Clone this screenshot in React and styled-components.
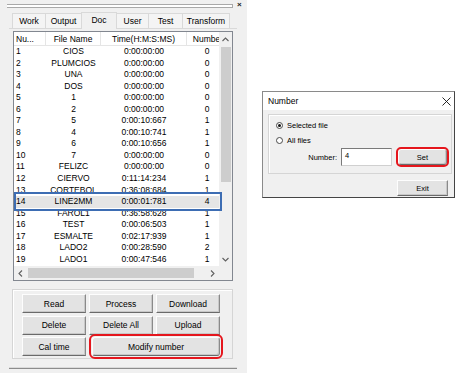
import React from 'react';
import styled, { createGlobalStyle } from 'styled-components';

const ROW_H = 11.55;
const HEAD_H = 14;

const files = [
  [1, 'CIOS', '0:00:00:00', 0],
  [2, 'PLUMCIOS', '0:00:00:00', 0],
  [3, 'UNA', '0:00:00:00', 0],
  [4, 'DOS', '0:00:00:00', 0],
  [5, '1', '0:00:00:00', 0],
  [6, '2', '0:00:00:00', 0],
  [7, '5', '0:00:10:667', 1],
  [8, '4', '0:00:10:741', 1],
  [9, '6', '0:00:10:656', 1],
  [10, '7', '0:00:00:00', 0],
  [11, 'FELIZC', '0:00:00:00', 0],
  [12, 'CIERVO', '0:11:14:234', 1],
  [13, 'CORTEBOL', '0:36:08:684', 1],
  [14, 'LINE2MM', '0:00:01:781', 4],
  [15, 'FAROL1', '0:36:58:628', 1],
  [16, 'TEST', '0:00:06:503', 1],
  [17, 'ESMALTE', '0:02:17:939', 1],
  [18, 'LADO2', '0:00:28:590', 2],
  [19, 'LADO1', '0:00:47:546', 1],
];

const SELECTED = 13;

const tabs = ['Work', 'Output', 'Doc', 'User', 'Test', 'Transform'];
const tabWidths = [34, 37, 36, 33, 35, 48];

const Global = createGlobalStyle`
  html, body {
    margin: 0;
    background: #fff;
    font-family: "Liberation Sans", Arial, sans-serif;
    color: #000;
  }
`;

const Page = styled.div`
  display: flex;
  align-items: flex-start;
  width: 460px;
  height: 373px;
  overflow: hidden;
`;

const LeftPanel = styled.div`
  width: 247px;
  height: 373px;
  background: #f0f0f0;
  display: flex;
  flex-direction: column;
  font-size: 8.5px;
`;

const TopStrip = styled.div`
  height: 12px;
  display: flex;
  align-items: flex-start;
  padding-left: 7px;
`;

const Groove = styled.div`
  width: 225px;
  height: 2px;
  margin-top: 4px;
  background: #fff;
  border-top: 1px solid #a9a9a9;
  border-bottom: 1px solid #a9a9a9;
  border-right: 1px solid #a9a9a9;
`;

const CloseMark = styled.span`
  font-size: 8px;
  font-weight: bold;
  line-height: 8px;
  margin: 1px 0 0 4px;
  color: #222;
`;

const TabRow = styled.div`
  display: flex;
  align-items: flex-end;
  height: 16px;
  margin-left: 12px;
`;

const Tab = styled.div`
  width: ${p => p.$w}px;
  height: ${p => (p.$active ? 17 : 15)}px;
  box-sizing: border-box;
  border: 1px solid #d9d9d9;
  border-bottom: none;
  margin-right: -1px;
  background: ${p => (p.$active ? '#f0f0f0' : '#f4f4f4')};
  display: flex;
  align-items: ${p => (p.$active ? 'flex-start' : 'center')};
  justify-content: center;
  padding-top: ${p => (p.$active ? 2 : 0)}px;
  margin-bottom: ${p => (p.$active ? -1 : 0)}px;
  position: relative;
  z-index: ${p => (p.$active ? 1 : 0)};
`;

const TabPane = styled.div`
  margin-left: 9px;
  width: 228px;
  box-sizing: border-box;
  border-top: 1px solid #d9d9d9;
  border-bottom: 1px solid #8c8c8c;
  box-shadow: inset 0 -1px 0 #dadada;
  padding: 2px 0 9px 4px;
  display: flex;
  flex-direction: column;
  gap: 8px;
`;

const Table = styled.div`
  position: relative;
  width: 220px;
  height: 250px;
  box-sizing: border-box;
  border: 1px solid #828790;
  background: #fff;
  display: grid;
  grid-template-columns: 1fr 13px;
  grid-template-rows: 1fr 14px;
`;

const List = styled.div`
  overflow: hidden;
`;

const Line = styled.div`
  display: grid;
  grid-template-columns: 32px 55px 86px 40px;
  height: ${p => (p.$head ? HEAD_H : ROW_H)}px;
  line-height: ${p => (p.$head ? HEAD_H : ROW_H)}px;
  background: ${p => (p.$selected ? '#e5e5e5' : '#fff')};
  white-space: nowrap;
`;

const Cell = styled.div`
  overflow: hidden;
  text-align: ${p => p.$align || 'center'};
  padding-left: ${p => (p.$align === 'left' ? 2 : 0)}px;
  ${p => p.$head && 'border-right: 1px solid #e5e5e5; border-bottom: 1px solid #e5e5e5; box-sizing: border-box;'}
`;

const VScroll = styled.div`
  grid-row: 1;
  grid-column: 2;
  background: #f0f0f0;
  display: flex;
  flex-direction: column;
  align-items: center;
`;

const HScroll = styled.div`
  background: #f0f0f0;
  display: flex;
  align-items: center;
`;

const Corner = styled.div`
  background: #f0f0f0;
`;

const Arrow = styled.div`
  width: 13px;
  height: 14px;
  display: flex;
  align-items: center;
  justify-content: center;
  flex-shrink: 0;
`;

const VThumb = styled.div`
  width: 10px;
  height: 135px;
  margin-top: 1px;
  background: #cdcdcd;
`;

const HThumb = styled.div`
  height: 10px;
  width: 166px;
  margin-left: 1px;
  background: #cdcdcd;
`;

const Spacer = styled.div`
  flex: 1;
`;

const Highlight = styled.div`
  position: absolute;
  left: 0;
  width: 208px;
  height: 19px;
  box-sizing: border-box;
  border: 2px solid #3d6db3;
  pointer-events: none;
`;

const GroupBox = styled.div`
  margin-left: -1px;
  width: 221px;
  box-sizing: border-box;
  border: 1px solid #d5d5d5;
  box-shadow: inset 1px 1px 0 #fff;
  padding: 4px 12px 2px 9px;
  display: grid;
  grid-template-columns: repeat(3, 64px);
  grid-auto-rows: 19px;
  column-gap: 3px;
  row-gap: 2.5px;
`;

const Button = styled.button`
  font: inherit;
  font-size: ${p => p.$size || 8.5}px;
  color: #000;
  padding: 0;
  margin: 0;
  background: #e3e3e3;
  border: 1px solid;
  border-color: #fdfdfd #8a8a8a #6a6a6a #fdfdfd;
  box-shadow: inset -1px -1px 0 #c8c8c8;
  grid-column: ${p => (p.$span ? 'span 2' : 'auto')};
  margin-left: ${p => (p.$span ? 3 : 0)}px;
  ${p => p.$marked && 'outline: 2px solid #e5161d; outline-offset: 1px; border-radius: 3px;'}
`;

const Dialog = styled.div`
  margin: 91px 0 0 15px;
  width: 193px;
  height: 107px;
  box-sizing: border-box;
  border: 1px solid #8a8a8a;
  border-right-color: #444;
  border-bottom-color: #444;
  background: #f0f0f0;
  display: flex;
  flex-direction: column;
  font-size: 7.5px;
`;

const TitleBar = styled.div`
  height: 18px;
  background: #fff;
  display: flex;
  align-items: center;
  justify-content: space-between;
  padding: 0 3px 0 5px;
  font-size: 8.5px;
`;

const DialogBody = styled.div`
  flex: 1;
  display: flex;
  flex-direction: column;
  align-items: flex-start;
  padding: 4px 5px 0 5px;
`;

const DlgGroup = styled.div`
  width: 184px;
  height: 60px;
  box-sizing: border-box;
  border: 1px solid #d5d5d5;
  box-shadow: inset 1px 1px 0 #fff;
  padding: 3px 2px 0 7px;
  display: flex;
  flex-direction: column;
`;

const RadioRow = styled.label`
  height: 15px;
  display: flex;
  align-items: center;
  gap: 4px;
`;

const Radio = styled.span`
  width: 7px;
  height: 7px;
  box-sizing: border-box;
  border-radius: 50%;
  border: 1px solid #4a4a4a;
  background: #fff;
  display: flex;
  align-items: center;
  justify-content: center;
  &::after {
    content: '';
    width: 3px;
    height: 3px;
    border-radius: 50%;
    background: ${p => (p.$checked ? '#111' : 'transparent')};
  }
`;

const NumberRow = styled.div`
  display: flex;
  align-items: center;
  justify-content: flex-end;
  height: 20px;
  margin-top: -1px;
`;

const Input = styled.div`
  width: 51px;
  height: 18px;
  box-sizing: border-box;
  background: #fff;
  border: 1px solid #7a7a7a;
  border-right-color: #d0d0d0;
  border-bottom-color: #d0d0d0;
  padding-left: 3px;
  line-height: 14px;
  margin: 0 6px 0 4px;
`;

const DlgButton = styled(Button)`
  width: ${p => p.$w}px;
  height: ${p => p.$h}px;
  ${p => p.$marked && 'outline-offset: 0; margin-right: 2px;'}
`;

const ExitRow = styled.div`
  align-self: stretch;
  display: flex;
  justify-content: flex-end;
  margin-top: 6px;
  padding-right: 1px;
`;

const Chevron = ({ dir }) => {
  const pts = {
    up: '0.5,4 3.5,1 6.5,4',
    down: '0.5,1 3.5,4 6.5,1',
    left: '4,0.5 1,3.5 4,6.5',
    right: '1,0.5 4,3.5 1,6.5',
  }[dir];
  const w = dir === 'up' || dir === 'down' ? 7 : 5;
  const h = dir === 'up' || dir === 'down' ? 5 : 7;
  return (
    <svg width={w} height={h} viewBox={`0 0 ${w} ${h}`}>
      <polyline points={pts} fill="none" stroke="#606060" strokeWidth="1.1" />
    </svg>
  );
};

const CloseIcon = () => (
  <svg width="9" height="9" viewBox="0 0 9 9">
    <path d="M0.5 0.5 L8.5 8.5 M8.5 0.5 L0.5 8.5" stroke="#111" strokeWidth="0.9" />
  </svg>
);

const FileTable = () => (
  <Table>
    <List>
      <Line $head>
        <Cell $head $align="left">Nu...</Cell>
        <Cell $head>File Name</Cell>
        <Cell $head>Time(H:M:S:MS)</Cell>
        <Cell $head>Numbe</Cell>
      </Line>
      {files.map(([n, name, time, count], i) => (
        <Line key={n} $selected={i === SELECTED}>
          <Cell $align="left">{n}</Cell>
          <Cell>{name}</Cell>
          <Cell>{time}</Cell>
          <Cell>{count}</Cell>
        </Line>
      ))}
    </List>
    <VScroll>
      <Arrow><Chevron dir="up" /></Arrow>
      <VThumb />
      <Spacer />
      <Arrow><Chevron dir="down" /></Arrow>
    </VScroll>
    <HScroll>
      <Arrow><Chevron dir="left" /></Arrow>
      <HThumb />
      <Spacer />
      <Arrow><Chevron dir="right" /></Arrow>
    </HScroll>
    <Corner />
    <Highlight style={{ top: HEAD_H + SELECTED * ROW_H - 4 }} />
  </Table>
);

const App = () => (
  <Page>
    <Global />
    <LeftPanel>
      <TopStrip>
        <Groove />
        <CloseMark>×</CloseMark>
      </TopStrip>
      <TabRow>
        {tabs.map((t, i) => (
          <Tab key={t} $w={tabWidths[i]} $active={t === 'Doc'}>{t}</Tab>
        ))}
      </TabRow>
      <TabPane>
        <FileTable />
        <GroupBox>
          <Button>Read</Button>
          <Button>Process</Button>
          <Button>Download</Button>
          <Button>Delete</Button>
          <Button>Delete All</Button>
          <Button>Upload</Button>
          <Button>Cal time</Button>
          <Button $span $marked>Modify number</Button>
        </GroupBox>
      </TabPane>
    </LeftPanel>

    <Dialog>
      <TitleBar>
        <span>Number</span>
        <CloseIcon />
      </TitleBar>
      <DialogBody>
        <DlgGroup>
          <RadioRow><Radio $checked />Selected file</RadioRow>
          <RadioRow><Radio />All files</RadioRow>
          <NumberRow>
            <span>Number:</span>
            <Input>4</Input>
            <DlgButton $w={49} $h={16} $size={7.5} $marked>Set</DlgButton>
          </NumberRow>
        </DlgGroup>
        <ExitRow>
          <DlgButton $w={51} $h={16} $size={7.5}>Exit</DlgButton>
        </ExitRow>
      </DialogBody>
    </Dialog>
  </Page>
);

export default App;
